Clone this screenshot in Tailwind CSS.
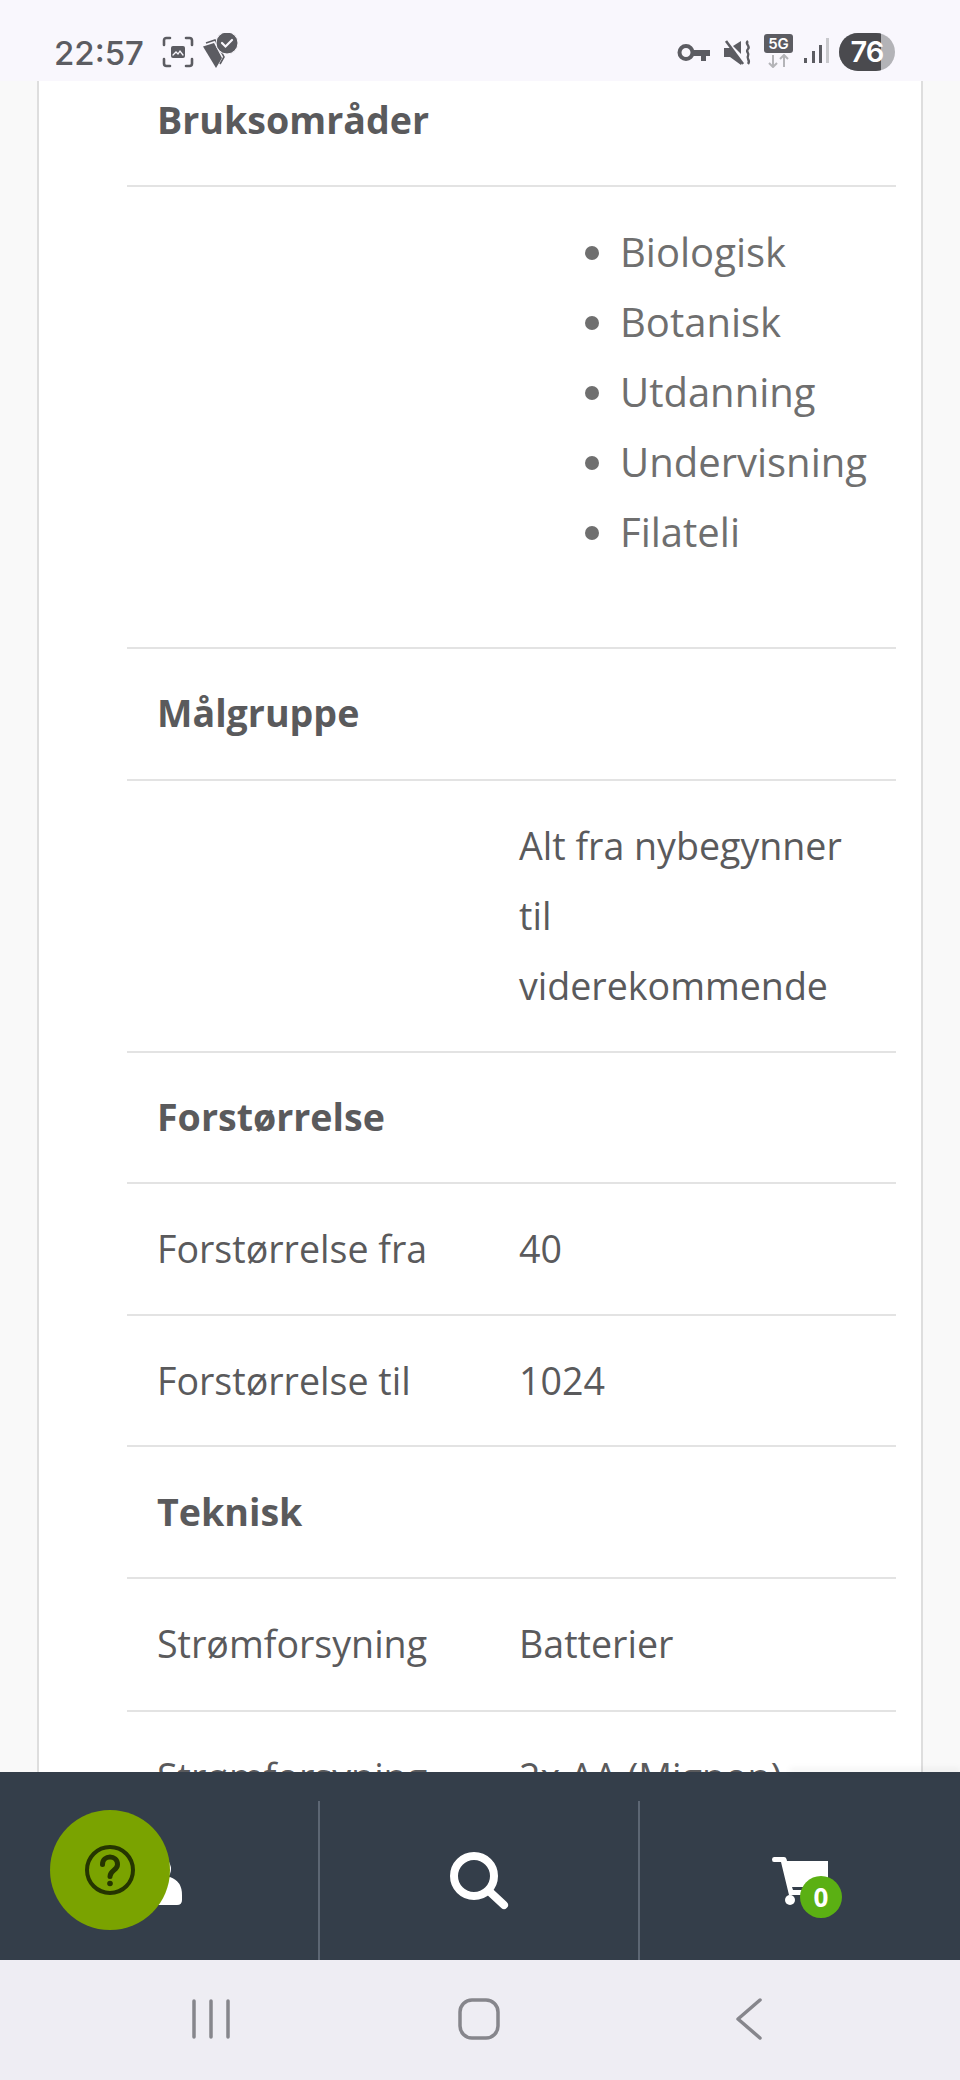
<!DOCTYPE html>
<html lang="nb">
<head>
  <meta charset="UTF-8" />
  <meta name="viewport" content="width=device-width, initial-scale=1.0">
  <title>Produktdetaljer</title>
  <script src="https://cdn.jsdelivr.net/npm/@tailwindcss/browser@4"></script>
</head>
<body class="bg-[#f9f9f9]">
<div class="relative w-[960px] h-[2080px] flex flex-col overflow-hidden font-['Open_Sans',sans-serif]">

  <!-- Status bar -->
  <div class="h-[81px] shrink-0 bg-[#f9f7fd] flex items-start pl-[54px] pr-[65px] pt-[33px] text-[#5c5c62]">
    <span class="text-[33px] leading-[40px] font-['Inter',sans-serif] font-medium w-[108px]">22:57</span>
    <svg class="w-[32px] h-[32px] mt-[3px]" viewBox="0 0 32 32" fill="none" stroke="#5c5c62" stroke-width="2.6" stroke-linecap="round">
      <path d="M2 9V4.500Q2 2 4.500 2H8M24 2h3.500Q30 2 30 4.500V9M2 23v4.500Q2 30 4.500 30H8M24 30h3.500Q30 30 30 27.500V23"/>
      <rect x="9" y="10" width="14" height="12" rx="2" fill="#5c5c62" stroke="none"/>
      <path d="M11 19l3-3 2 2 2-3 3 4" stroke="#f9f7fd" stroke-width="1.300"/>
    </svg>
    <svg class="w-[36px] h-[36px] ml-[8px]" viewBox="0 0 36 36">
      <path d="M1 13.500L12 10 20 25 14 35Z" fill="#5c5c62"/>
      <path d="M4 10l9-3 9 17-4 7" fill="none" stroke="#5c5c62" stroke-width="1.600"/>
      <circle cx="25" cy="10" r="11" fill="#5c5c62" stroke="#f9f7fd" stroke-width="1"/>
      <path d="M20 10l3.500 3.500L30 7" fill="none" stroke="#f9f7fd" stroke-width="2.200" stroke-linecap="round"/>
    </svg>

    <div class="ml-auto flex items-start">
      <svg class="w-[34px] h-[20px] mt-[10px]" viewBox="0 0 34 20" fill="none">
        <circle cx="9" cy="9.500" r="6.500" stroke="#5c5c62" stroke-width="4"/>
        <path d="M15 7h18v6h-4v5h-5v-5h-9z" fill="#5c5c62"/>
      </svg>
      <svg class="w-[28px] h-[26px] ml-[13px] mt-[7px]" viewBox="0 0 28 26" fill="none">
        <path d="M0 8h5l2 0 10 12v5L6 17H0z" fill="#5c5c62"/>
        <path d="M9 6l8-5v13z" fill="#5c5c62"/>
        <path d="M2 1l17 23" stroke="#5c5c62" stroke-width="2.600"/>
        <path d="M24 1c-4 3 3 5 0 8s2 4 0 7 3 4 0 8" stroke="#5c5c62" stroke-width="2.400"/>
      </svg>
      <div class="w-[29px] ml-[12px] flex flex-col items-center">
        <span class="w-[29px] h-[19px] mt-[1px] bg-[#5c5c62] rounded-[3px] text-white text-[15px] leading-[19px] text-center font-['Inter',sans-serif] font-semibold">5G</span>
        <svg class="w-[22px] h-[14px] mt-[1px]" viewBox="0 0 22 14" fill="none" stroke="#b4b4b8" stroke-width="2">
          <path d="M5 1v12M1 9l4 4 4-4M16 13V1M12 5l4-4 4 4"/>
        </svg>
      </div>
      <svg class="w-[25px] h-[26px] ml-[11px] mt-[5px]" viewBox="0 0 25 26" fill="#5c5c62">
        <rect x="0" y="20" width="3" height="5"/>
        <rect x="8" y="13" width="3" height="12"/>
        <rect x="15" y="7" width="3" height="18"/>
        <rect x="22" y="0" width="3" height="25" fill="#c9c9cd"/>
      </svg>
      <div class="relative w-[56px] h-[38px] ml-[10px] rounded-full bg-[#b3b3b7] overflow-hidden">
        <div class="w-[42px] h-full bg-[#4a4a4e]"></div>
        <span class="absolute inset-0 text-center text-white text-[29px] leading-[38px] font-['Inter',sans-serif] font-semibold tracking-[-1px]">76</span>
      </div>
    </div>
  </div>

  <!-- Product table -->
  <main class="flex-1 min-h-0 overflow-hidden px-[37px]">
    <div class="h-full bg-white border-x-2 border-[#dedede] pl-[88px] pr-[25px] text-[37.6px] leading-[70px] text-[#5a5a5c]">
      <div class="h-[106px] border-b-2 border-[#e3e3e3] pl-[30px] pt-[4px] font-bold">Bruksområder</div>

      <div class="h-[462px] border-b-2 border-[#e3e3e3] pl-[392px] pt-[30px]">
        <ul class="list-disc pl-[101px] text-[40px] text-[#6f6f6f]">
          <li>Biologisk</li>
          <li>Botanisk</li>
          <li>Utdanning</li>
          <li>Undervisning</li>
          <li>Filateli</li>
        </ul>
      </div>

      <div class="h-[132px] border-b-2 border-[#e3e3e3] pl-[30px] pt-[29px] font-bold">Målgruppe</div>

      <div class="h-[272px] border-b-2 border-[#e3e3e3] pl-[392px] pr-[30px] pt-[30px]">Alt fra nybegynner til viderekommende</div>

      <div class="h-[131px] border-b-2 border-[#e3e3e3] pl-[30px] pt-[29px] font-bold">Forstørrelse</div>

      <div class="h-[132px] border-b-2 border-[#e3e3e3] grid grid-cols-[362px_1fr] pl-[30px] pt-[30px]">
        <span>Forstørrelse fra</span><span>40</span>
      </div>
      <div class="h-[131px] border-b-2 border-[#e3e3e3] grid grid-cols-[362px_1fr] pl-[30px] pt-[30px]">
        <span>Forstørrelse til</span><span>1024</span>
      </div>

      <div class="h-[132px] border-b-2 border-[#e3e3e3] pl-[30px] pt-[30px] font-bold">Teknisk</div>

      <div class="h-[133px] border-b-2 border-[#e3e3e3] grid grid-cols-[362px_1fr] pl-[30px] pt-[30px]">
        <span>Strømforsyning</span><span>Batterier</span>
      </div>
      <div class="grid grid-cols-[362px_1fr] pl-[30px] pt-[30px]">
        <span>Strømforsyning</span><span>2x AA (Mignon)</span>
      </div>
    </div>
  </main>

  <!-- Bottom shop bar -->
  <div class="relative h-[188px] shrink-0 bg-[#343e4a] grid grid-cols-3 pt-[29px]">
    <div class="absolute right-0 top-0 w-[170px] h-px shadow-[0_-2px_6px_rgba(0,0,0,0.25)]"></div>
    <div class="border-r-2 border-[#5c6673] flex items-center justify-center">
      <svg class="w-[46px] h-[48px]" viewBox="0 0 46 48" fill="#fff">
        <circle cx="23" cy="12" r="12"/>
        <path d="M5 48Q0 48 0 43v-5Q0 24 12 20q11 6 22 0 12 4 12 18v5q0 5-5 5z"/>
      </svg>
    </div>
    <div class="border-r-2 border-[#5c6673] flex items-center justify-center">
      <svg class="w-[60px] h-[60px]" viewBox="0 0 60 60" fill="none" stroke="#fff" stroke-linecap="round">
        <circle cx="25" cy="25" r="20" stroke-width="8"/>
        <path d="M41 41l14 13" stroke-width="8"/>
      </svg>
    </div>
    <div class="flex items-center justify-center">
      <div class="relative w-[56px] h-[48px]">
        <svg class="w-[56px] h-[48px]" viewBox="0 0 56 48" fill="#fff">
          <path d="M2 0h10q2 0 2.500 2L15 4h41v26H20l1 3h32v5H17L9 5H2Q0 5 0 2.500T2 0z"/>
          <circle cx="18" cy="43" r="5"/>
          <circle cx="46" cy="43" r="5"/>
        </svg>
        <span class="absolute left-[28px] top-[19px] w-[42px] h-[42px] rounded-full bg-[#5bb013] text-white text-[26px] leading-[42px] text-center font-bold">0</span>
      </div>
    </div>

    <button class="absolute left-[50px] top-[38px] w-[120px] h-[120px] rounded-full bg-[#7aa300] flex items-center justify-center">
      <svg class="w-[50px] h-[50px]" viewBox="0 0 50 50" fill="none" stroke="#253500" stroke-linecap="round">
        <circle cx="25" cy="25" r="23" stroke-width="4"/>
        <path d="M17.500 19.500c0-10 15-10 15 0 0 6-7.500 5.500-7.500 12" stroke-width="5"/>
        <circle cx="25" cy="38.500" r="2.800" fill="#253500" stroke="none"/>
      </svg>
    </button>
  </div>

  <!-- Android nav -->
  <div class="h-[120px] shrink-0 bg-[#eeedf3] flex items-center pl-[192px] pb-[3px]">
    <svg class="w-[38px] h-[40px]" viewBox="0 0 38 40" stroke="#86868c" stroke-width="3.500" stroke-linecap="round">
      <path d="M2 2v36M19 2v36M36 2v36"/>
    </svg>
    <svg class="ml-[228px] w-[42px] h-[42px]" viewBox="0 0 42 42" fill="none" stroke="#86868c" stroke-width="3.500">
      <rect x="2" y="2" width="38" height="38" rx="12"/>
    </svg>
    <svg class="ml-[235px] w-[28px] h-[42px]" viewBox="0 0 28 42" fill="none" stroke="#86868c" stroke-width="3.500" stroke-linecap="round" stroke-linejoin="round">
      <path d="M25 2L3 21l22 19"/>
    </svg>
  </div>
</div>
</body>
</html>
